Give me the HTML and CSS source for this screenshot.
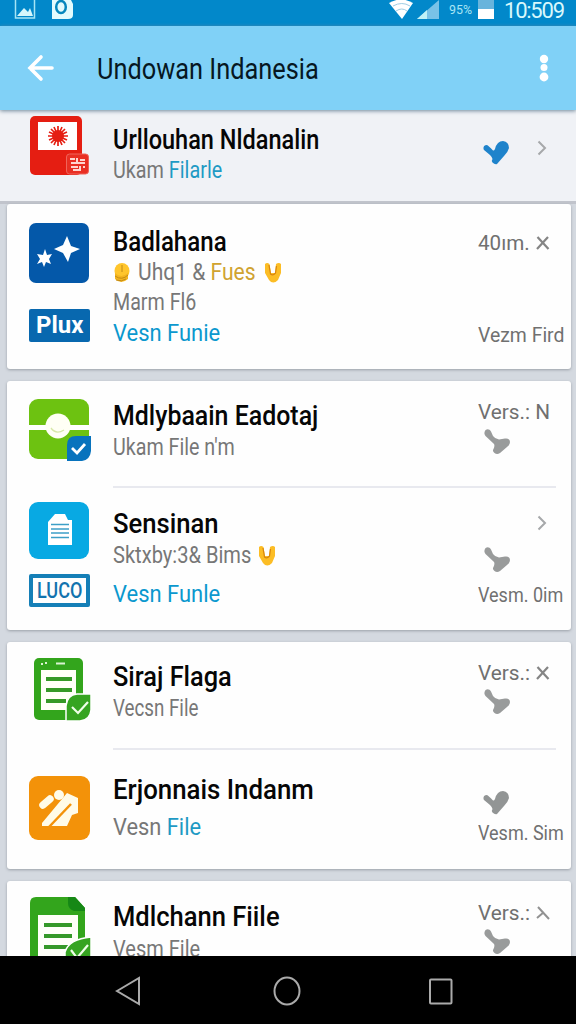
FILE: index.html
```html
<!DOCTYPE html>
<html lang="id">
<head>
<meta charset="utf-8">
<title>Undowan Indanesia</title>
<link rel="stylesheet" href="styles.css">
</head>
<body>
<svg class="defs" width="0" height="0">
  <defs>
    <symbol id="pin" viewBox="0 0 26 26"><path d="M.5 3.500C1 0 5-1 7 2.500L9 7Q11 10 15 10.500L21 9.500Q26 9 26 13Q26 16 23 18L16 24Q13 26 10.500 24Q8 22 9.500 20Q11 17 10 15L1.500 7Q0 5 .5 3.500Z"/></symbol>
    <symbol id="tick" viewBox="0 0 26 24"><path d="M.5 8Q0 4 4 4Q6 5 10 9.500Q11 10 12 8Q14 0 20 0Q26 1 26 7Q25 11 21 15L14 23Q12 24 9.500 21.500Q8 20 9.500 18Q9 16 7 14L1 9Z"/></symbol>
    <symbol id="chevron" viewBox="0 0 10 16"><path d="M1.500 1.500L8 8L1.500 14.500" fill="none" stroke="#a6a8aa" stroke-width="2"/></symbol>
    <symbol id="cross" viewBox="0 0 14 14"><path d="M1.500 1L12.500 13M12 1L1 13" fill="none" stroke="#858585" stroke-width="2.200"/></symbol>
    <symbol id="hands" viewBox="0 0 18 20"><path d="M1 1Q3-1 5.500 1L7 10H11L12 1Q15-1 17 1V10L14 17Q9 22 5 17L1 10Z" fill="#fcbd25"/><path d="M5 2L6.500 11Q9 13 11.500 10L12.500 3" fill="none" stroke="#d8860e" stroke-width="1.200"/></symbol>
  </defs>
</svg>
<div class="phone">
  <header class="status">
    <svg class="notif" width="76" height="26" viewBox="0 0 76 26">
      <path d="M15.500 0V18H34.500V0" fill="none" stroke="#a4e4f5" stroke-width="1.500"/>
      <path d="M17 16L24 8L28 12L30 8L33 16Z" fill="#d5f6fb"/>
      <path d="M52 0H71L73 4V15Q73 19 68 19H52Z" fill="#e4fbfd"/>
      <ellipse cx="61" cy="7" rx="4.800" ry="6" fill="none" stroke="#0787bd" stroke-width="2.500"/>
    </svg>
    <svg class="signals" width="187" height="26" viewBox="389 0 187 26">
      <path d="M389 3Q401-4 413 3L402 19Z" fill="#fff"/>
      <path d="M393 6Q402 1 410 6M396 11Q402 7 407 11" fill="none" stroke="#9ecce4"/>
      <path d="M417 19L439 0V19Z" fill="#79c2e7"/><path d="M417 19L427 10V19Z" fill="#bff1f7"/>
      <text x="449" y="14" font-size="13" textLength="23" lengthAdjust="spacingAndGlyphs" fill="#a8e5f5">95%</text>
      <path d="M478 0H494V10H478Z" fill="#68b4dc"/><path d="M478 9H494V19H478Z" fill="#fff"/>
      <text x="504" y="18" font-size="22" textLength="61" fill="#d8f8fc">10:509</text>
    </svg>
  </header>
  <div class="appbar">
    <svg class="back" width="28" height="28" viewBox="0 0 28 28"><path d="M14 3L3 14L14 25M3 14H25" fill="none" stroke="#fff" stroke-width="3.600" stroke-linecap="round"/></svg>
    <h1 class="fit w-app">Undowan Indanesia</h1>
    <svg class="more" width="10" height="30" viewBox="0 0 10 30" fill="#fff"><circle cx="5" cy="6" r="4.200"/><circle cx="5" cy="14.500" r="3.500"/><circle cx="5" cy="24" r="4.400"/></svg>
  </div>
  <main class="list">
    <section class="featured row">
      <div class="icons">
        <svg width="62" height="62" viewBox="0 0 62 62"><rect x="1" y="1" width="52" height="59" rx="5" fill="#e51e12"/><path d="M9 7H48V35H9Z" fill="#fff"/>
          <path d="M29 11V31M19 21H39M22 14L36 28M36 14L22 28M25 12L33 30M33 12L25 30M20 17L38 25M20 25L38 17" stroke="#e51e12" stroke-width="1.700"/><circle cx="29" cy="21" r="6" fill="#e51e12"/>
          <rect x="37.500" y="39" width="22" height="20" rx="3" fill="#e92f23" stroke="#f0645a"/><path d="M41 44H46M48 43V48M51 45H56M42 48H56M42 52H49M51 51V55M54 52H56M44 55H52" stroke="#ffd5cf" stroke-width="2"/></svg>
      </div>
      <div class="body"><h2 class="fit w1">Urllouhan Nldanalin</h2><p class="fit s1">Ukam <b>Filarle</b></p></div>
      <div class="side"><svg class="tick blue"><use href="#tick"/></svg><svg class="chevron"><use href="#chevron"/></svg></div>
    </section>

    <section class="card card-one">
      <div class="row row-one">
        <div class="icons">
          <svg width="60" height="60" viewBox="0 0 60 60"><rect width="60" height="60" rx="7" fill="#0458a9"/><path d="M38 13L42 23L51 26L42 30L39 39L34 30L25 26L34 22ZM16 26L18 32L23 31L20 36L22 41L17 39L15 44L13 39L8 41L11 36L8 31L14 32Z" fill="#fff"/></svg>
          <div class="brand solid"><span class="fit w-plux">Plux</span></div>
        </div>
        <div class="body">
          <h2 class="fit w2">Badlahana</h2>
          <p class="with-icon"><svg width="17" height="20" viewBox="0 0 17 20"><ellipse cx="9" cy="8" rx="7.500" ry="8" fill="#ffc52c"/><path d="M2 10Q8 16 15 10V16Q8 22 2 16Z" fill="#f4b51e"/><path d="M9 2V9M2 13Q9 18 15 12M3 17Q9 19 13 16" fill="none" stroke="#c28a16"/></svg><span class="fit s2">Uhq1 &amp; <b class="gold">Fues</b></span><svg class="hands hands-a"><use href="#hands"/></svg></p>
          <p class="fit s3 third">Marm Fl6</p>
          <p class="fit s4 link link-one">Vesn Funie</p>
        </div>
        <div class="side"><p class="fit m1">40ım.</p><svg class="cross"><use href="#cross"/></svg><p class="fit m2 low-one">Vezm Fird</p></div>
      </div>
    </section>

    <section class="card card-two">
      <div class="row row-two">
        <div class="icons">
          <svg width="62" height="62" viewBox="0 0 62 62"><rect width="60" height="60" rx="9" fill="#6dc211"/><path d="M0 26H60V31H0Z" fill="#fff"/><circle cx="29" cy="27" r="12.500" fill="#fffff5"/><path d="M22 29Q27 36 35 31" fill="none" stroke="#d7e8a8" stroke-width="1.300"/><path d="M38 62V46Q38 37 47 37H62V52Q61 61 53 62Z" fill="#0873bd"/><path d="M43 49L48 54L56 45" fill="none" stroke="#fff" stroke-width="2.800"/></svg>
        </div>
        <div class="body"><h2 class="fit w3">Mdlybaain Eadotaj</h2><p class="fit s5">Ukam File n'm</p></div>
        <div class="side"><p class="fit m3">Vers.: N</p><svg class="pin"><use href="#pin"/></svg></div>
      </div>
      <div class="divider"></div>
      <div class="row row-three">
        <div class="icons">
          <svg width="60" height="57" viewBox="0 0 60 57"><rect width="60" height="57" rx="9" fill="#08a9e3"/><path d="M19 43V20L26 12H36L39 18H43V43Z" fill="#fff"/><path d="M22 22.500H40M22 27H40M22 31H40M22 35.500H40" stroke="#3c9fc7" stroke-width="1.300"/></svg>
          <div class="brand outline"><span class="fit w-luco">LUCO</span></div>
        </div>
        <div class="body">
          <h2 class="fit w4">Sensinan</h2>
          <p class="with-icon"><span class="fit s6">Sktxby:3&amp; Bims</span><svg class="hands hands-b"><use href="#hands"/></svg></p>
          <p class="fit s4 link link-two">Vesn Funle</p>
        </div>
        <div class="side"><svg class="chevron"><use href="#chevron"/></svg><svg class="pin"><use href="#pin"/></svg><p class="fit m4 low-two">Vesm. 0im</p></div>
      </div>
    </section>

    <section class="card card-three">
      <div class="row row-four">
        <div class="icons">
          <svg width="62" height="64" viewBox="0 0 62 64"><rect x="5" width="49" height="62" rx="5" fill="#33a51c"/><path d="M12 12H47V52H12Z" fill="#fffff8"/><path d="M17 21H43M17 32H43M17 43H37" stroke="#369927" stroke-width="4"/><path d="M12 6H14M16 5H18M27 5.500H36" stroke="#d9f3d1" stroke-width="2"/><path d="M37 63V48Q38 37 48 36H62V52Q61 62 51 63Z" fill="#36a421" stroke="#fff" stroke-width="1.500"/><path d="M43 49L49 55L59 44" fill="none" stroke="#efffe8" stroke-width="2.200"/></svg>
        </div>
        <div class="body"><h2 class="fit w5">Siraj Flaga</h2><p class="fit s7">Vecsn File</p></div>
        <div class="side"><p class="fit m5">Vers.:</p><svg class="cross"><use href="#cross"/></svg><svg class="pin"><use href="#pin"/></svg></div>
      </div>
      <div class="divider"></div>
      <div class="row row-five">
        <div class="icons">
          <svg width="61" height="64" viewBox="0 0 61 64"><rect width="61" height="64" rx="9" fill="#f39209"/><path d="M14 29L21 23" stroke="#fffbe8" stroke-width="7.500" stroke-linecap="round"/><circle cx="30" cy="19" r="5" fill="#fffbe8"/><path d="M13 50V47L38 17L49 22V37L43 39L38 50Z" fill="#fffbe8"/><path d="M20 51L42 28" stroke="#f39209" stroke-width="2.500"/></svg>
        </div>
        <div class="body"><h2 class="fit w6">Erjonnais Indanm</h2><p class="fit s8">Vesn <b>File</b></p></div>
        <div class="side"><svg class="tick gray"><use href="#tick"/></svg><p class="fit m4 low-three">Vesm. Sim</p></div>
      </div>
    </section>

    <section class="card card-four">
      <div class="row row-six">
        <div class="icons">
          <svg width="62" height="64" viewBox="0 0 62 64"><path d="M1 6Q1 0 7 0H46L56 11V64H1Z" fill="#33a51c"/><path d="M39 0H46L56 11V14H45Q39 12 39 6Z" fill="#168816"/><path d="M9 18H49V60H9Z" fill="#fffff8"/><path d="M15 28H43M15 39H43M15 50H39" stroke="#369927" stroke-width="4"/><path d="M36 64V55Q40 42 62 40V64Z" fill="#36a421" stroke="#fff" stroke-width="1.500"/><path d="M42 53L48 61L59 48" fill="none" stroke="#efffe8" stroke-width="2.200"/></svg>
        </div>
        <div class="body"><h2 class="fit w7">Mdlchann Fiile</h2><p class="fit s9">Vesm File</p></div>
        <div class="side"><p class="fit m5">Vers.:</p><svg class="cross" viewBox="0 0 14 14"><path d="M2 1L13 13M8 6L1 12" fill="none" stroke="#929292" stroke-width="2"/></svg><svg class="pin"><use href="#pin"/></svg></div>
      </div>
    </section>
  </main>
  <nav class="nav">
    <svg width="28" height="30" viewBox="0 0 28 30"><path d="M2 15L24 2V28Z"/></svg>
    <svg width="28" height="30" viewBox="0 0 28 30"><ellipse cx="16" cy="15" rx="12.500" ry="13.500"/></svg>
    <svg width="28" height="30" viewBox="0 0 28 30"><rect x="3" y="3.500" width="21.500" height="24" rx="1"/></svg>
  </nav>
</div>
</body>
</html>
```
FILE: styles.css
```css
* { box-sizing: border-box; }
body { margin: 0; font-family: Roboto, "Liberation Sans", sans-serif; }
h1, h2, p { margin: 0; white-space: nowrap; }
svg { display: block; flex: none; overflow: visible; }
.defs { position: absolute; }
.phone { width: 576px; height: 1024px; overflow: hidden; display: flex; flex-direction: column; background: #d4d9e0; }
.status { height: 26px; flex: none; background: #0288ca; display: flex; justify-content: space-between; }
.appbar { height: 84px; flex: none; background: #80d1f7; display: flex; align-items: center; padding: 0 27px; box-shadow: 0 1px 4px #70889a; z-index: 1; }
.appbar h1 { margin: 2px 0 0 42px; font-size: 30px; font-weight: 400; line-height: 36px; color: #061722; }
.more { margin-left: auto; }
.list { flex: 1; min-height: 0; overflow: hidden; }

/* Condensed text: each label has its own horizontal scale */
.fit { width: max-content; transform: scaleX(var(--fit, 1)); transform-origin: left center; }
.w-app { --fit: .845; }
.w1 { --fit: .84; }
.w2 { --fit: .86; }
.w3 { --fit: .89; }
.w4 { --fit: .915; }
.w5 { --fit: .905; }
.w6 { --fit: .922; }
.w7 { --fit: .912; }
.s1 { --fit: .86; }
.s2 { --fit: .915; }
.s3 { --fit: .855; }
.s4 { --fit: .955; }
.s5 { --fit: .855; }
.s6 { --fit: .873; }
.s7 { --fit: .815; }
.s8 { --fit: .95; }
.s9 { --fit: .87; }
.m1 { --fit: 1.03; }
.m2 { --fit: .97; }
.m3 { --fit: 1.04; }
.m4 { --fit: .9; }
.m5 { --fit: 1.04; }
.w-plux { --fit: 1.04; }
.w-luco { --fit: .82; }

.row { display: grid; grid-template-columns: 84px 365px 1fr; padding-left: 22px; }
.featured { height: 94px; background: #f0f2f6; border-bottom: 3px solid #c1c4cc; padding: 5px 0 0 29px; }
.featured .body { padding-top: 9px; }
.body h2 { font-size: 28px; font-weight: 500; line-height: 32px; color: #060606; }
.body p { font-size: 23px; line-height: 30px; color: #777; }
.body b { font-weight: 400; color: #1e9ac4; }
.body .gold { color: #d0a331; }
.body .link { color: #0b98ce; }
.with-icon { display: flex; align-items: center; }
.hands { width: 18px; height: 20px; }

.card { width: 564px; margin: 0 0 12px 7px; background: #fefefe; border-radius: 3px; box-shadow: 0 1px 3px #9aa0a7; }
.card-one { height: 165px; }
.card-two { height: 249px; }
.card-three { height: 227px; }
.card-four { height: 90px; }
.divider { height: 2px; margin: 0 15px 0 106px; background: #e8e9ef; }
.row-one { padding-top: 19px; }
.row-two { height: 105px; padding-top: 18px; }
.row-three { padding-top: 14px; }
.row-four { height: 106px; padding-top: 16px; }
.row-five { padding-top: 26px; }
.row-six { padding-top: 16px; }
.row-one .body { padding-top: 3px; }
.row-two .body { padding-top: 1px; }
.row-three .body { padding-top: 6px; }
.row-four .body { padding-top: 3px; }
.row-five .body { margin-top: -2px; }
.row-six .body { padding-top: 4px; }
.row-two .body p, .row-three .with-icon, .row-four .body p { margin-top: 1px; }
.row-five .body p { margin-top: 7px; }
.body .third { line-height: 29px; }
.body .link-one { line-height: 34px; }
.body .link-two { margin-top: 9px; }
.row-six .body p { margin-top: 2px; }

.brand { display: flex; align-items: center; justify-content: center; width: 61px; height: 33px; border-radius: 2px; font-size: 23px; line-height: 30px; }
.brand .fit { transform-origin: center; }
.solid { margin-top: 26px; background: #0868af; color: #fff; font-weight: 700; }
.outline { margin-top: 15px; border: 4px solid #157fb7; color: #1273ae; font-weight: 500; font-size: 22px; }

.side { display: flex; flex-wrap: wrap; align-content: flex-start; }
.side p { font-size: 20px; line-height: 24px; color: #707070; }
.side .cross { width: 14px; height: 14px; }
.chevron { width: 10px; height: 16px; }
.pin { width: 26px; height: 26px; fill: #999b9b; }
.tick { width: 26px; height: 24px; }
.blue { fill: #1e83cb; }
.gray { fill: #929595; }
.featured .tick { margin: 26px 0 0 5px; }
.featured .chevron { margin: 25px 0 0 28px; }
.row-one .side > p:first-child, .row-four .side p, .row-six .side p { width: 58px; }
.row-one .side { padding-top: 8px; }
.row-one .cross { margin-top: 5px; }
.low-one { margin-top: 68px; }
.row-two .side { flex-direction: column; padding-top: 1px; }
.row-two .pin { margin: 5px 0 0 6px; }
.row-three .side { flex-direction: column; }
.row-three .chevron { margin: 13px 0 0 59px; }
.row-three .pin { margin: 16px 0 0 6px; }
.low-two { margin-top: 10px; }
.row-four .side { padding-top: 3px; }
.row-four .cross, .row-six .cross { margin-top: 5px; }
.row-four .pin, .row-six .pin { margin: 4px 30px 0 6px; }
.row-five .side { flex-direction: column; padding-top: 15px; }
.row-five .tick { margin-left: 5px; }
.low-three { margin-top: 6px; }
.row-six .side { padding-top: 4px; }
.hands-a { margin-left: -3px; }
.hands-b { margin-left: -13px; }
.with-icon .s2 { margin-left: 8px; }

.nav { height: 68px; flex: none; background: #000; display: flex; align-items: center; padding: 2px 121px 0 115px; justify-content: space-between; }
.nav svg { fill: none; stroke: #aaa; stroke-width: 2; }
```
